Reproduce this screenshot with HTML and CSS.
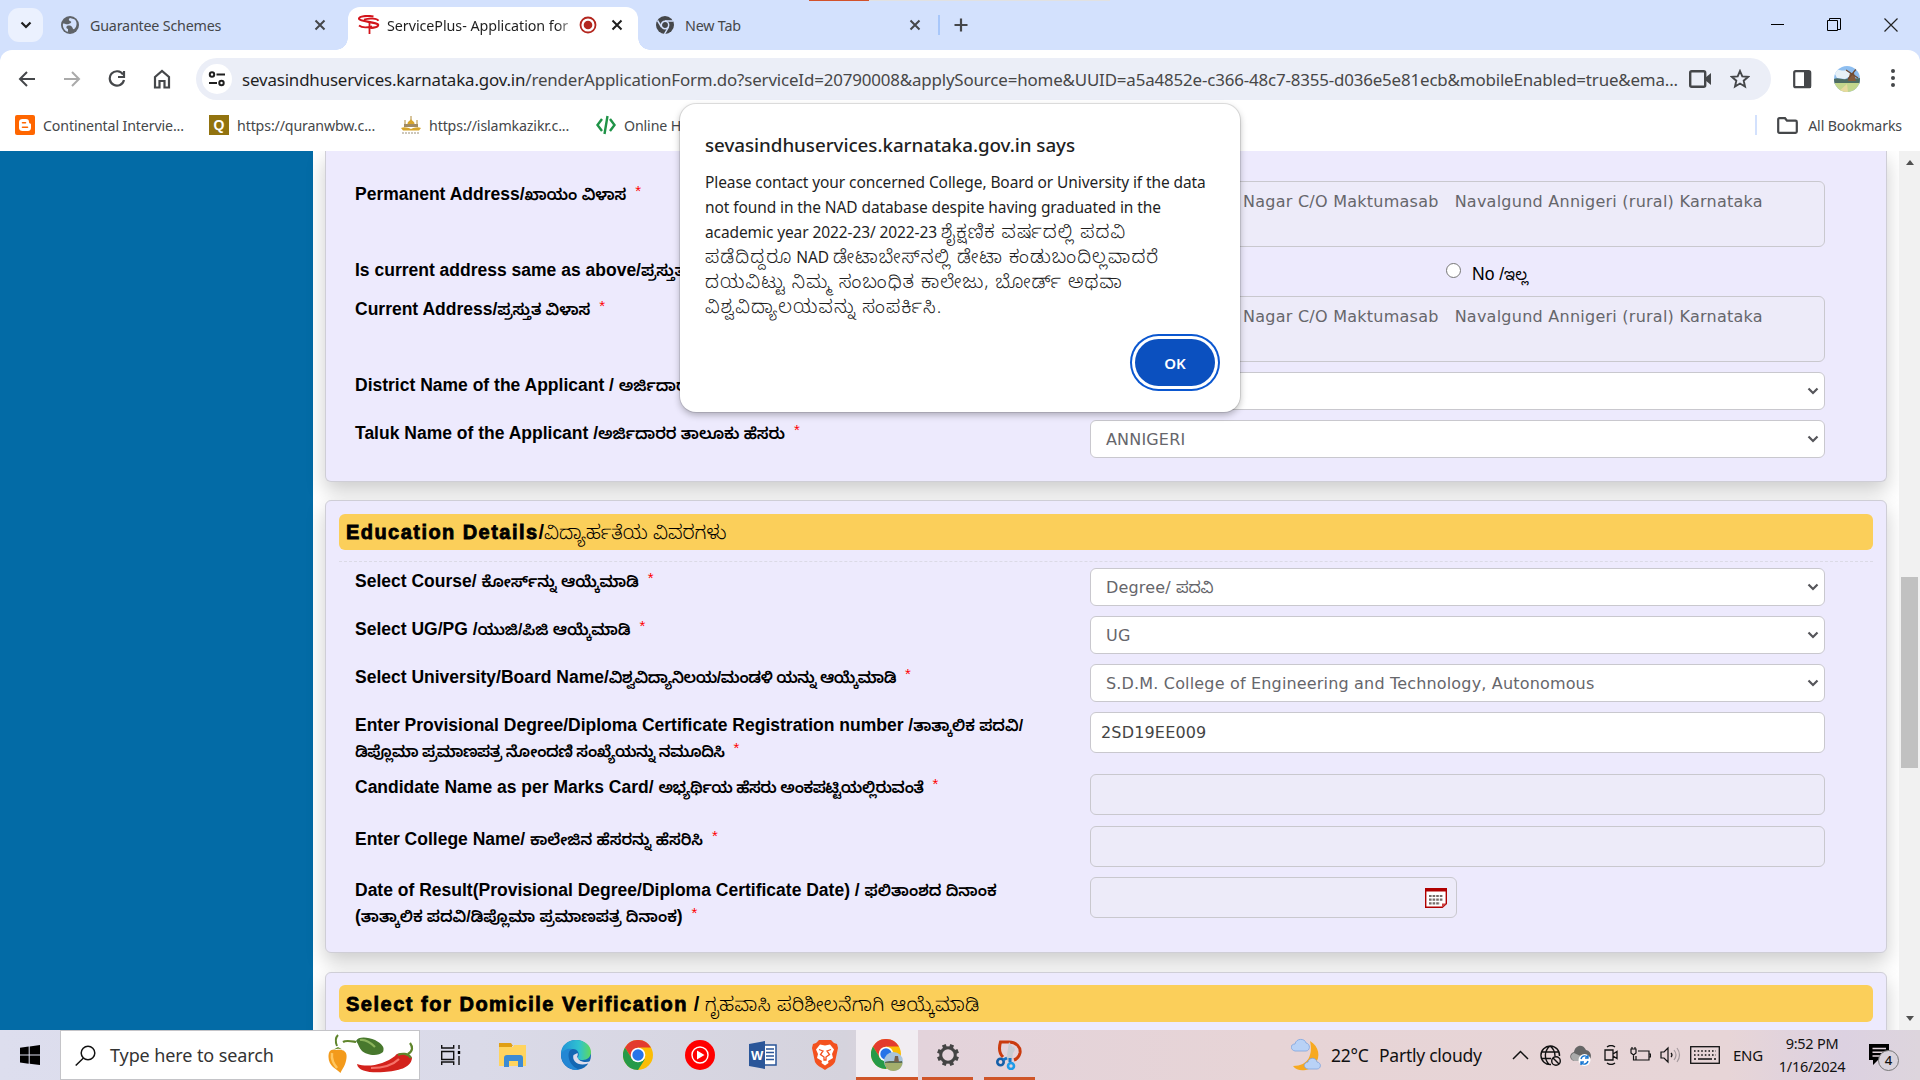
FILE: index.html
```html
<!DOCTYPE html>
<html lang="en">
<head>
<meta charset="utf-8">
<title>ServicePlus- Application for Yuva Nidhi</title>
<link rel="stylesheet" href="styles.css">
</head>
<body>
<div class="browser">
  <header class="tabstrip">
    <button class="tab-search"><svg width="12" height="8" viewBox="0 0 12 8"><path d="M1.5 1.5 6 6l4.500-4.500" fill="none" stroke="#1f1f1f" stroke-width="2.200"/></svg></button>
    <div class="tab tab-first">
      <svg width="18" height="18" viewBox="0 0 18 18"><circle cx="9" cy="9" r="9" fill="#5f6368"/><path d="M9 2c-2 1-1 3 .5 3.200 1.500.3.500 1.800-.5 2.200C7 8 6 9 4 7.800L2 7.500c-.8 4 2 8 5 8.300V13c-2-.5-2-2-1-3 2-.8 4-.3 5 .9 1 1 .5 2 2 2.300C17 10 16 4 12.500 3z" fill="#d3e1fd"/></svg>
      <span class="tab-title">Guarantee Schemes</span>
      <svg class="tab-x" width="12" height="12" viewBox="0 0 12 12"><path d="M1.500 1.500l9 9m0-9l-9 9" stroke="#45474a" stroke-width="2"/></svg>
    </div>
    <div class="tab tab-active">
      <svg width="22" height="20" viewBox="0 0 22 20"><path d="M15.500 1.500C9 .500 1 1 1 3.800 1 6.500 18 7 20 9.500c1 2.500-5 4-9 3" fill="none" stroke="#d3141b" stroke-width="2.200"/><path d="M6 4.500c6-1.500 13-1 14.500 1.200M1 10.500c3 2.500 9 2 13 .8" fill="none" stroke="#d3141b" stroke-width="1.800"/><path d="M11.500 6v13" stroke="#d3141b" stroke-width="1.800"/></svg>
      <span class="tab-title fade">ServicePlus- Application for</span>
      <svg width="18" height="18" viewBox="0 0 18 18"><circle cx="9" cy="9" r="7.500" fill="none" stroke="#b3261e" stroke-width="1.800"/><circle cx="9" cy="9" r="4.300" fill="#b3261e"/></svg>
      <svg class="tab-x" width="12" height="12" viewBox="0 0 12 12"><path d="M1.500 1.500l9 9m0-9l-9 9" stroke="#1f1f1f" stroke-width="2"/></svg>
    </div>
    <div class="tab tab-last">
      <svg width="18" height="18" viewBox="0 0 18 18"><circle cx="9" cy="9" r="9" fill="#45474a"/><circle cx="9" cy="9" r="3.700" fill="#45474a" stroke="#d3e1fd" stroke-width="1.500"/><path d="M9 5h8M5.500 11l-4-6.500M12.500 11l-4 7" stroke="#d3e1fd" stroke-width="1.500"/></svg>
      <span class="tab-title">New Tab</span>
      <svg class="tab-x" width="12" height="12" viewBox="0 0 12 12"><path d="M1.500 1.500l9 9m0-9l-9 9" stroke="#45474a" stroke-width="2"/></svg>
    </div>
    <i class="tab-sep"></i>
    <svg class="plus" width="14" height="14" viewBox="0 0 14 14"><path d="M7 .5v13M.5 7h13" stroke="#45474a" stroke-width="2.200"/></svg>
    <div class="window-controls">
      <svg width="14" height="14" viewBox="0 0 14 14"><path d="M1 6.500h13" stroke="#000"/></svg>
      <svg width="14" height="14" viewBox="0 0 14 14"><path d="M.5 2.500h10v10H.5zM2.500 2.500v-2h11v11h-2.500" fill="none" stroke="#000"/></svg>
      <svg width="14" height="14" viewBox="0 0 14 14"><path d="M.5.500l13 13m0-13l-13 13" stroke="#222" stroke-width="1.200"/></svg>
    </div>
    <div class="share-line"><i></i></div>
  </header>

  <nav class="toolbar">
    <svg class="nav-btn" width="18" height="18" viewBox="0 0 18 18"><path d="M9 2L2 9l7 7M2 9h15" fill="none" stroke="#45474a" stroke-width="2"/></svg>
    <svg class="nav-btn" width="18" height="18" viewBox="0 0 18 18"><path d="M9 2l7 7-7 7M16 9H1" fill="none" stroke="#aaa" stroke-width="2"/></svg>
    <svg class="nav-btn" width="18" height="18" viewBox="0 0 18 18"><path d="M15 4.500A7.200 7.200 0 1 0 16 10M16 1v6h-6" fill="none" stroke="#45474a" stroke-width="2.200"/></svg>
    <svg class="nav-btn" width="18" height="20" viewBox="0 0 18 20"><path d="M2 8l7-6 7 6v10.500h-4.500V12h-5v6.500H2z" fill="none" stroke="#45474a" stroke-width="2.200"/></svg>
    <div class="omnibox">
      <span class="site-info"><svg width="18" height="16" viewBox="0 0 18 16"><g fill="none" stroke="#1f1f1f" stroke-width="2"><circle cx="4" cy="3.500" r="2.200"/><path d="M8.500 3.500H17M1 12h8"/><circle cx="13.500" cy="12" r="2.200"/></g></svg></span>
      <span class="url"><b>sevasindhuservices.karnataka.gov.in</b>/renderApplicationForm.do?serviceId=20790008&amp;applySource=home&amp;UUID=a5a4852e-c366-48c7-8355-d036e5e81ecb&amp;mobileEnabled=true&amp;ema...</span>
      <svg width="22" height="18" viewBox="0 0 22 18"><rect x="1.200" y="1.200" width="15" height="15.600" rx="1.500" fill="none" stroke="#45474a" stroke-width="2.400"/><path d="M16 8l6-5v12l-6-5z" fill="#45474a"/></svg>
      <svg class="star" width="20" height="20" viewBox="0 0 20 20"><path d="M10 2l2.300 5.400 5.700.5-4.300 3.800 1.300 5.800-5-3-5 3 1.300-5.800L2 7.900l5.700-.5z" fill="none" stroke="#45474a" stroke-width="1.900"/></svg>
    </div>
    <svg width="19" height="19" viewBox="0 0 19 19"><rect x="1.200" y="1.200" width="16" height="16" rx="1.500" fill="none" stroke="#45474a" stroke-width="2.200"/><path d="M11 1h7v17h-7z" fill="#45474a"/></svg>
    <svg class="avatar" width="26" height="26" viewBox="0 0 26 26"><clipPath id="av"><circle cx="13" cy="13" r="13"/></clipPath><g clip-path="url(#av)"><path fill="#8ebef0" d="M0 0h26v26H0z"/><path d="M0 6c4-5 7 0 12-2l6 5-7 4-8-1z" fill="#e8f1f8"/><path d="M0 13c4-2 8 1 12 0s9 0 14-1v6H0z" fill="#4e6c62"/><path d="M0 17h26v9H0z" fill="#c3d68c"/><path d="M14 15l2-8h4l2 8z" fill="#855b3c"/><path d="M12 4l12 8M23 2l-9 11" stroke="#6f4b35" stroke-width="1.300"/><path d="M4 26l9-8 1 8z" fill="#e7da9d"/></g></svg>
    <svg width="6" height="22" viewBox="0 0 6 22"><g fill="#45474a"><circle cx="3" cy="3" r="2"/><circle cx="3" cy="10" r="2"/><circle cx="3" cy="17" r="2"/></g></svg>
  </nav>

  <div class="bookmarks">
    <a class="bm"><svg width="20" height="20" viewBox="0 0 20 20"><rect width="20" height="20" rx="2" fill="#f60"/><path d="M7.500 4H11c2 0 3 1.300 3 3 0 2 2 1 2 2.500V13c0 2-1.500 3-3 3H7.500c-2 0-3.500-1.300-3.500-3V7c0-2 1.500-3 3.500-3z" fill="#fff"/><path d="M7.500 7.800h3M7.500 12.200h5" stroke="#f60" stroke-width="1.600" stroke-linecap="round"/></svg>Continental Intervie...</a>
    <a class="bm bm2"><span class="fav-q">Q</span>https://quranwbw.c...</a>
    <a class="bm bm3"><svg width="20" height="18" viewBox="0 0 20 18"><path d="M10 0v4M4 4v5M16 4v5" stroke="#b08a3a" stroke-width="1"/><path d="M6.500 8c0-3 2.500-3 3.500-5 1 2 3.500 2 3.500 5z" fill="#d7a52b"/><path d="M3 8h14v3H3z" fill="#a08a63"/><path d="M0 12c4-1.500 7 0 10 1 3-1 6-2.500 10-1l-2 2.500H2z" fill="#d7a52b"/><path d="M1 17h18" stroke="#9a8f78" stroke-dasharray="2 1"/></svg>https://islamkazikr.c...</a>
    <a class="bm bm4"><svg width="20" height="20" viewBox="0 0 20 20"><path d="M6 4l-4.500 6L6 16M14 4l4.500 6L14 16M11.500 1l-3 18" fill="none" stroke="#1f9347" stroke-width="2.400"/></svg>Online H</a>
    <a class="all-bm"><i></i><svg width="21" height="17" viewBox="0 0 21 17"><path d="M1.200 2.500C1.200 1.500 1.500 1.200 2.500 1.200H8l2 2.500h8.500c1 0 1.300.4 1.300 1.300v9.500c0 1-.4 1.300-1.300 1.300h-16c-1 0-1.300-.4-1.300-1.300z" fill="none" stroke="#45474a" stroke-width="2.200"/></svg>All Bookmarks</a>
  </div>

  <main class="page">
    <aside class="side"></aside>
    <div class="form">
      <section class="card card-address">
        <div class="row"><label>Permanent Address/<span class="kn">ಖಾಯಂ ವಿಳಾಸ</span><sup>*</sup></label><div class="field area"><span>Nagar C/O Maktumasab&nbsp;&nbsp; Navalgund Annigeri (rural) Karnataka</span></div></div>
        <div class="row row-radio"><label>Is current address same as above/<span class="kn">ಪ್ರಸ್ತುತ</span></label><div class="radio"><i></i>No /<span class="kn">ಇಲ್ಲ</span></div></div>
        <div class="row"><label>Current Address/<span class="kn">ಪ್ರಸ್ತುತ ವಿಳಾಸ</span><sup>*</sup></label><div class="field area"><span>Nagar C/O Maktumasab&nbsp;&nbsp; Navalgund Annigeri (rural) Karnataka</span></div></div>
        <div class="row"><label>District Name of the Applicant / <span class="kn">ಅರ್ಜಿದಾರ</span></label><div class="field select"><svg class="chev" viewBox="0 0 12 8"><path d="M1.500 1.500L6 6l4.500-4.500"/></svg></div></div>
        <div class="row"><label>Taluk Name of the Applicant /<span class="kn">ಅರ್ಜಿದಾರರ ತಾಲೂಕು ಹೆಸರು</span><sup>*</sup></label><div class="field select">ANNIGERI<svg class="chev" viewBox="0 0 12 8"><path d="M1.500 1.500L6 6l4.500-4.500"/></svg></div></div>
      </section>

      <section class="card card-edu">
        <h2><strong>Education Details</strong>/<span class="kn">ವಿದ್ಯಾರ್ಹತೆಯ ವಿವರಗಳು</span></h2>
        <hr>
        <div class="row"><label>Select Course/ <span class="kn">ಕೋರ್ಸ್‌ನ್ನು ಆಯ್ಕೆಮಾಡಿ</span><sup>*</sup></label><div class="field select">Degree/&nbsp;<span class="kn">ಪದವಿ</span><svg class="chev" viewBox="0 0 12 8"><path d="M1.500 1.500L6 6l4.500-4.500"/></svg></div></div>
        <div class="row"><label>Select UG/PG /<span class="kn">ಯುಜಿ/ಪಿಜಿ ಆಯ್ಕೆಮಾಡಿ</span><sup>*</sup></label><div class="field select">UG<svg class="chev" viewBox="0 0 12 8"><path d="M1.500 1.500L6 6l4.500-4.500"/></svg></div></div>
        <div class="row"><label>Select University/Board Name/<span class="kn kn-tight">ವಿಶ್ವವಿದ್ಯಾನಿಲಯ/ಮಂಡಳಿ ಯನ್ನು ಆಯ್ಕೆಮಾಡಿ</span><sup>*</sup></label><div class="field select">S.D.M. College of Engineering and Technology, Autonomous<svg class="chev" viewBox="0 0 12 8"><path d="M1.500 1.500L6 6l4.500-4.500"/></svg></div></div>
        <div class="row"><label>Enter Provisional Degree/Diploma Certificate Registration number /<span class="kn">ತಾತ್ಕಾಲಿಕ ಪದವಿ/</span><br><span class="kn kn-tight">ಡಿಪ್ಲೊಮಾ ಪ್ರಮಾಣಪತ್ರ ನೋಂದಣಿ ಸಂಖ್ಯೆಯನ್ನು ನಮೂದಿಸಿ</span><sup>*</sup></label><div class="field input">2SD19EE009</div></div>
        <div class="row row-wide"><label>Candidate Name as per Marks Card/ <span class="kn kn-tight">ಅಭ್ಯರ್ಥಿಯ ಹೆಸರು ಅಂಕಪಟ್ಟಿಯಲ್ಲಿರುವಂತೆ</span><sup>*</sup></label><div class="field input disabled"></div></div>
        <div class="row"><label>Enter College Name/ <span class="kn">ಕಾಲೇಜಿನ ಹೆಸರನ್ನು ಹೆಸರಿಸಿ</span><sup>*</sup></label><div class="field input disabled"></div></div>
        <div class="row"><label>Date of Result(Provisional Degree/Diploma Certificate Date) / <span class="kn">ಫಲಿತಾಂಶದ ದಿನಾಂಕ</span><br>(<span class="kn">ತಾತ್ಕಾಲಿಕ ಪದವಿ/ಡಿಪ್ಲೊಮಾ ಪ್ರಮಾಣಪತ್ರ ದಿನಾಂಕ</span>)<sup>*</sup></label><div class="field input disabled date"><svg width="22" height="20" viewBox="0 0 22 20"><path d="M.7.700h20.600v15l-4 3.600H.7z" fill="#fff" stroke="#b00000" stroke-width="1.400"/><path d="M0 0h22v3.500H0z" fill="#b00000"/><path d="M4 8h14M4 11.700h14M4 15.400h11" stroke="#746c69" stroke-width="2.200" stroke-dasharray="2.600 1"/><path d="M17 19.500V15.500h4.500z" fill="#c44"/></svg></div></div>
      </section>

      <section class="card card-domicile">
        <h2><strong>Select for Domicile Verification</strong> / <span class="kn">ಗೃಹವಾಸಿ ಪರಿಶೀಲನೆಗಾಗಿ ಆಯ್ಕೆಮಾಡಿ</span></h2>
      </section>
    </div>
    <div class="scrollbar"><i class="up"></i><i class="thumb"></i><i class="down"></i></div>
  </main>

  <div class="dialog">
    <h1>sevasindhuservices.karnataka.gov.in says</h1>
    <p>Please contact your concerned College, Board or University if the data<br>not found in the NAD database despite having graduated in the<br>academic year 2022-23/ 2022-23 <span class="kn">ಶೈಕ್ಷಣಿಕ ವರ್ಷದಲ್ಲಿ ಪದವಿ</span><br><span class="kn">ಪಡೆದಿದ್ದರೂ</span> NAD <span class="kn">ಡೇಟಾಬೇಸ್‌ನಲ್ಲಿ ಡೇಟಾ ಕಂಡುಬಂದಿಲ್ಲವಾದರೆ</span><br><span class="kn">ದಯವಿಟ್ಟು ನಿಮ್ಮ ಸಂಬಂಧಿತ ಕಾಲೇಜು, ಬೋರ್ಡ್ ಅಥವಾ</span><br><span class="kn">ವಿಶ್ವವಿದ್ಯಾಲಯವನ್ನು ಸಂಪರ್ಕಿಸಿ.</span></p>
    <button>OK</button>
  </div>
</div>

<footer class="taskbar">
  <div class="start"><svg width="20" height="20" viewBox="0 0 20 20"><path d="M0 2.800L8.700 1.500V9.600H0zM9.700 1.400L20 0v9.600H9.700zM0 10.500h8.700v8.200L0 17.400zM9.700 10.500H20V20L9.700 18.700z"/></svg></div>
  <div class="search">
    <svg width="21" height="21" viewBox="0 0 21 21"><circle cx="13" cy="8" r="6.800" fill="none" stroke="#111" stroke-width="1.500"/><path d="M8.500 13L.7 20.500" stroke="#111" stroke-width="1.500"/></svg>
    <span>Type here to search</span>
    <svg class="peppers" width="88" height="42" viewBox="0 0 88 42"><path d="M10 12C8 7 8 4 11 1" fill="none" stroke="#5f852c" stroke-width="2"/><path d="M1.500 23c0-7 3-8 8-7 6-1 11 1 10 8-1 8-4 10-6 15-4-4-12-7-12-16z" fill="#f39a1b"/><path d="M5 19c-1 7 2 11 5 15" fill="none" stroke="#ffc65f" stroke-width="2.500"/><path d="M4 17c5-3 10-3 14 0l-7-4z" fill="#6d912f"/><path d="M16 8c3-2 7-1 13 0" fill="none" stroke="#5f852c" stroke-width="2.200"/><path d="M29 7c2-5 12-4 19-1 7 4 10 7 8 12-5 5-17 3-21-1-3-3-3-6-6-10z" fill="#47782d"/><path d="M33 6c5-1 10 2 15 7" fill="none" stroke="#8ab35b" stroke-width="2.200"/><path d="M30 30c12 4 28 0 38-8 3-5 15-3 17 2-1 10-14 13-28 14-12 1-26 0-27-8z" fill="#d3221c"/><path d="M72 25c-6 6-16 9-28 9" fill="none" stroke="#f6736a" stroke-width="2.200"/><path d="M71 21c4-2 10-2 13 3M81 20c5-3 5-7 2-11" fill="none" stroke="#5f852c" stroke-width="2.200"/></svg>
  </div>
  <div class="slot"><svg width="20" height="20" viewBox="0 0 20 20"><path d="M.7 0v3h12V0M.7 6.500h12v8H.7zM.7 20v-3h12v3M18 0v4M18 11v9" fill="none" stroke="#111" stroke-width="1.400"/><path d="M16.800 6h2.400v3h-2.400z"/></svg></div>
  <div class="slot"><svg width="28" height="24" viewBox="0 0 28 24"><path d="M0 0h12l2 3h-1v6H0z" fill="#e09f14"/><path d="M0 4h14l1-2h12v21H0z" fill="#ffd45f"/><path d="M5 24V15c0-2 1-3 3-3h13c2 0 3 1 3 3v9h-5v-6h-9v6z" fill="#3c8bd4"/></svg></div>
  <div class="slot"><svg width="30" height="30" viewBox="0 0 30 30"><defs><linearGradient id="eg"><stop stop-color="#2293d8"/><stop offset=".6" stop-color="#2fc2d0"/><stop offset="1" stop-color="#5fd95c"/></linearGradient></defs><circle cx="15" cy="15" r="15" fill="#1467b3"/><path d="M0 14C0 5 7 0 15 0c9 0 15 6 15 12 0 5-4 8-8 8-5 0-6-2-5-3 2-3 0-8-5-8-6 0-10 4-12 5z" fill="url(#eg)"/><path d="M0 14c2-4 7-6 11-5-6 2-4 15 4 19l3 2C8 31 0 24 0 14z" fill="#2387d4"/><path d="M12.500 15c-2 6 5 12 14.500 8.500l1 1.500c2-2 2-4 2-4-5 2-12 1-13.500-3.500-1-1 1-2 0-4.500z" fill="#dcdcec"/></svg></div>
  <div class="slot"><svg width="30" height="30" viewBox="0 0 30 30"><circle cx="15" cy="15" r="15" fill="#fbbd05"/><path d="M2 7.500A15 15 0 0 1 28 7.500H15L9 19z" fill="#e33b2e"/><path d="M2 7.500A15 15 0 0 0 15 30l7-11-7 3-6-3z" fill="#269a48"/><circle cx="15" cy="15" r="7.300" fill="#fff"/><circle cx="15" cy="15" r="5.700" fill="#2674e8"/></svg></div>
  <div class="slot"><svg width="30" height="30" viewBox="0 0 30 30"><circle cx="15" cy="15" r="15" fill="#f00"/><circle cx="15" cy="15" r="8" fill="none" stroke="#fff" stroke-width="1.400"/><path d="M12 10.500l7.500 4.500-7.500 4.500z" fill="#fff"/></svg></div>
  <div class="slot"><svg width="28" height="28" viewBox="0 0 28 28"><path d="M14 4h13v20H14z" fill="#fff" stroke="#2a5699" stroke-width="1.500"/><path d="M17 8h8M17 11.500h8M17 15h8M17 18.500h8" stroke="#2a5699" stroke-width="1.500"/><path d="M0 3L16 0v28L0 25z" fill="#2a5699"/><text x="2" y="19" font-family="Liberation Sans" font-weight="700" font-size="13" fill="#fff">W</text></svg></div>
  <div class="slot"><svg width="26" height="30" viewBox="0 0 26 30"><path d="M7 0h12l3 3 3 1 1 4-3 14c-2 4-6 5-10 8-4-3-8-4-10-8L0 8l1-4 3-1z" fill="#f4511e"/><path d="M13 5.500l5-1 4 5-2 4.500 1 4-5 3 .5 2L13 25.500 9.500 23l.5-2-5-3 1-4-2-4.500 4-5z" fill="#fff"/><path d="M7 9.500l4 1.500-2.500 3.500L12 17v3h2v-3l3.500-2.500L15 11l4-1.500" fill="none" stroke="#f4511e" stroke-width="1.300"/></svg></div>
  <div class="slot active"><svg width="32" height="32" viewBox="0 0 32 32"><circle cx="15" cy="15" r="15" fill="#fbbd05"/><path d="M2 7.500A15 15 0 0 1 28 7.500H15L9 19z" fill="#e33b2e"/><path d="M2 7.500A15 15 0 0 0 15 30l7-11-7 3-6-3z" fill="#269a48"/><circle cx="15" cy="15" r="7.300" fill="#fff"/><circle cx="15" cy="15" r="5.700" fill="#2674e8"/><circle cx="22.500" cy="22.500" r="9.500" fill="#a9c4dc"/><path d="M13.500 24c5-2 12-1 18-1 0 5-4 9-9 9s-8-3-9-8z" fill="#a3ae6c"/><path d="M14 23c5-2 12 0 17-1v2H14z" fill="#5b6d55"/><path d="M23 23l1-6h3l1 6z" fill="#76604c"/></svg></div>
  <div class="slot open"><svg width="24" height="28" viewBox="0 0 24 28"><ellipse cx="12" cy="14" rx="7.300" ry="7.300" fill="none" stroke="#444" stroke-width="3"/><g stroke="#444" stroke-width="4"><path d="M12 3v4M12 21v4M1 14h4M19 14h4" transform="rotate(22.500 12 14)"/><path d="M12 3v4M12 21v4M1 14h4M19 14h4" transform="rotate(67.500 12 14)"/></g></svg></div>
  <div class="slot open"><svg width="26" height="30" viewBox="0 0 26 30"><path d="M7 17C3 13 3 7 4.500 2H13c7 0 12 5 11 11-1 4-3 6-6 7" fill="none" stroke="#ca3b0e" stroke-width="3"/><path d="M13 2l-2 13 5 6 1.500-13zM18 6l-9 13 3 2 7-11z" fill="#c9ccd1"/><circle cx="4.500" cy="22" r="3.200" fill="none" stroke="#155fa8" stroke-width="2.600"/><circle cx="15" cy="26" r="3" fill="none" stroke="#1f9be8" stroke-width="2.600"/><path d="M7 20l4-2M14 22v-4" stroke="#1975c4" stroke-width="3"/></svg></div>
  <div class="tray">
    <svg width="30" height="36" viewBox="0 0 30 36"><path d="M19 4c9 5 11 16 5 23-5 7-17 9-22 2 16 0 20-12 17-25z" fill="#f7a91f"/><path d="M4 14c-5-1-5-7 0-7 1-6 10-6 11-1 5 1 4 8 0 8z" fill="#b9d2f6" stroke="#7da5df" stroke-width=".8"/><path d="M17 32c-5-1-5-6 0-7 1-5 8-5 9 0 5 1 4 7 0 7z" fill="#b9d2f6" stroke="#7da5df" stroke-width=".8"/></svg>
    <span>22°C</span><span>Partly cloudy</span>
    <svg width="17" height="10" viewBox="0 0 17 10"><path d="M1 9l7.500-7.500L16 9" fill="none" stroke="#111" stroke-width="1.500"/></svg>
    <svg width="21" height="21" viewBox="0 0 21 21"><g fill="none" stroke="#111" stroke-width="1.400"><path d="M11 19.500A9.300 9.300 0 1 1 19.500 11M1 7h18M1 13.500h10M10 1C4 6 4 14 9 19.500M10 1c4 3 5 6 5 10"/><circle cx="16" cy="16" r="4.300"/><path d="M13 13l6 6"/></g></svg>
    <svg width="21" height="22" viewBox="0 0 21 22"><path d="M4 17c-5-1-5-8 0-9C5 1 13-1 16 6c5 1 6 6 4 9" fill="#666"/><path d="M4 17c-4-2-4-7 0-8l9 4v4z" fill="#aaa"/><circle cx="14.500" cy="16" r="6" fill="#fff"/><path d="M11 15c1-4 6-4 7-1m0-3v3h-3M18 17c-1 4-6 4-7 1m0 3v-3h3" fill="none" stroke="#1776d1" stroke-width="1.400"/></svg>
    <svg width="14" height="20" viewBox="0 0 14 20"><path d="M3 2q4-3 8 0M3 18q4 3 8 0M1 5h8v10H1zM9 9l4-2.500v7L9 11z" fill="none" stroke="#111" stroke-width="1.300"/></svg>
    <svg width="21" height="16" viewBox="0 0 21 16"><path d="M8 4h11v9H6V9M19.500 7h1v3h-1M1 2h5v4L3.500 8 1 6zM2 2V0M5 2V0M3.500 8v5H6" fill="none" stroke="#111" stroke-width="1.200"/></svg>
    <svg width="21" height="18" viewBox="0 0 21 18"><path d="M1 6h3l4-4v14l-4-4H1zM11 7q2 2 0 4" fill="none" stroke="#111" stroke-width="1.200"/><path d="M14 4q4 5 0 10M17 2q5 7 0 14" fill="none" stroke="#a59a9e" stroke-width="1.200"/></svg>
    <svg width="30" height="18" viewBox="0 0 30 18"><rect x=".7" y=".7" width="28.600" height="16.600" fill="none" stroke="#111" stroke-width="1.300"/><path d="M4 5h22M4 9h22" stroke="#111" stroke-width="1.500" stroke-dasharray="1.600 2"/><path d="M4 13h2M8 13h14M24 13h2" stroke="#111" stroke-width="1.300"/></svg>
    <span class="lang">ENG</span>
    <div class="clock"><span>9:52 PM</span><span>1/16/2024</span></div>
    <div class="notif"><svg width="21" height="22" viewBox="0 0 21 22"><path d="M0 0h20v16H9l-5 5v-5H0z"/><path d="M3.500 4.500H17M3.500 8.300H17M3.500 12H12" stroke="#e3d5dd" stroke-width="1.400"/></svg><b>4</b></div>
  </div>
</footer>
</body>
</html>
```
FILE: styles.css
```css
* { box-sizing: border-box; }
body { margin: 0; width: 1920px; height: 1080px; overflow: hidden; font-family: "Noto Sans", "Noto Sans Kannada", sans-serif; background: #fff; display: flex; flex-direction: column; }
svg, i { display: block; flex: none; }
i { font-style: normal; }
button { border: 0; padding: 0; font: inherit; }
.kn { font-family: "Liberation Sans", "Noto Sans Kannada", sans-serif; line-height: 0; }
.browser { position: relative; height: 1030px; display: flex; flex-direction: column; }

/* tab strip */
.tabstrip { position: relative; z-index: 1; height: 50px; background: #d3e1fd; display: flex; align-items: center; padding-left: 8px; }
.tab-search { width: 35px; height: 34px; border-radius: 11px; background: #ebf1fe; display: grid; place-items: center; }
.tab { display: flex; align-items: center; height: 43px; font-size: 14.300px; color: #45474a; letter-spacing: -.2px; }
.tab-title { flex: 1; white-space: nowrap; overflow: hidden; margin-left: 11px; line-height: 24px; padding-top: 1px; }
.tab-first { width: 283px; padding-left: 18px; margin-right: 22px; }
.tab-active { position: relative; width: 290px; align-self: flex-end; background: #fff; border-radius: 12px 12px 0 0; padding: 0 15px 7px 10px; color: #1f1f1f; letter-spacing: -.05px; }
.tab-active .tab-title { margin-left: 7px; }
.tab-active::before, .tab-active::after { content: ""; position: absolute; bottom: 0; width: 12px; height: 12px; }
.tab-active::before { left: -12px; background: radial-gradient(circle at 0 0, transparent 11.500px, #fff 12px); }
.tab-active::after { right: -12px; background: radial-gradient(circle at 100% 0, transparent 11.500px, #fff 12px); }
.tab-active .tab-x { margin-left: 14px; }
.fade { -webkit-mask-image: linear-gradient(90deg, #000 88%, rgba(0,0,0,.2) 98%); mask-image: linear-gradient(90deg, #000 88%, rgba(0,0,0,.2) 98%); }
.tab-last { width: 283px; padding-left: 18px; }
.tab-sep { width: 2px; height: 20px; background: #a8c7fa; margin: 0 14px 0 17px; }
.window-controls { margin-left: auto; display: flex; gap: 43px; padding-right: 22px; }
.share-line { position: absolute; left: 809px; top: 0; width: 301px; height: 1px; background: #e1e1e1; }
.share-line i { width: 60px; height: 1px; background: #d2512a; }

/* toolbar */
.toolbar { height: 50px; padding: 8px 25px 0 18px; display: flex; align-items: center; background: #fff; border-radius: 12px 12px 0 0; box-shadow: 0 -12px 0 0 #d3e1fd; }
.nav-btn { margin-right: 27px; }
.omnibox { width: 1575px; height: 42px; flex: none; margin: 0 22px 0 -2px; background: #ebeef7; border-radius: 21px; display: flex; align-items: center; padding: 0 21px 0 6px; }
.site-info { width: 30px; height: 30px; border-radius: 50%; background: #fff; display: grid; place-items: center; }
.url { flex: 1; margin-left: 10px; font-size: 16.900px; color: #474747; white-space: nowrap; letter-spacing: -.155px; }
.url b { font-weight: 400; color: #1f1f1f; }
.star { margin-left: 19px; }
.avatar { margin: 0 30px 0 22px; }

/* bookmarks */
.bookmarks { height: 51px; display: flex; align-items: center; padding: 0 0 1px 15px; font-size: 14.200px; letter-spacing: -.13px; color: #45474a; background: #fff; }
.bm { display: flex; align-items: center; gap: 8px; width: 194px; white-space: nowrap; }
.bm2 { width: 192px; }
.bm3 { width: 195px; }
.fav-q { width: 20px; height: 20px; background: #92730f; color: #fff; font: 700 14px/20px "Liberation Sans", sans-serif; text-align: center; }
.all-bm { margin-left: auto; display: flex; align-items: center; gap: 10px; padding-right: 18px; }
.all-bm i { width: 2px; height: 20px; background: #d3e1fd; margin-right: 10px; }

/* page */
.page { height: 879px; display: flex; overflow: hidden; }
.side { width: 313px; background: #036ba6; flex: none; }
.form { width: 1586px; flex: none; padding: 0 12px; background: #fff; }
.card { background: #edeafd; border: 1px solid #cfced6; border-radius: 6px; box-shadow: 0 9px 20px rgba(0,0,0,.2); }
.card-address { height: 331px; margin-bottom: 18px; border-top: 0; border-radius: 0 0 6px 6px; padding: 30px 0 0 29px; }
.card-edu { height: 453px; margin-bottom: 19px; padding: 13px 13px 0; }
.card-domicile { height: 120px; padding: 12px 13px 0; }
h2 { margin: 0; height: 36px; border-radius: 6px; background: #fbcf5a; padding-left: 7px; font: 700 20px/37px "Liberation Sans", sans-serif; color: #000; white-space: nowrap; }
h2 strong { letter-spacing: 1.450px; -webkit-text-stroke: .8px #000; }
h2 .kn { font-weight: 300; font-size: 19px; }
.card-domicile h2 { height: 37px; line-height: 39px; }
.card-domicile strong { letter-spacing: 1.520px; }
.card-domicile .kn { letter-spacing: .5px; }
hr { margin: 11px 0 6px; border: 0; border-top: 1px dashed #dbdae6; height: 1px; }
.card-edu .row { margin-left: 16px; }
.row { display: grid; grid-template-columns: 735px 735px; margin-bottom: 10px; align-items: start; }
.row-wide { margin-bottom: 11px; }
.row-radio { height: 29px; }
label { font: 700 17.500px/26px "Liberation Sans", sans-serif; color: #000; white-space: nowrap; height: 26px; }
.row:has(br) label { height: 52px; }
label .kn { font-weight: 600; font-size: 15.800px; letter-spacing: -.05px; }
label .kn-tight { letter-spacing: -.5px; }
sup { color: #f00; font: 400 15px/0 "Liberation Sans", sans-serif; margin-left: 9px; vertical-align: 4px; }
.field { position: relative; display: flex; align-items: center; border: 1px solid #c9c8ce; border-radius: 6px; background: #fff; font-family: "DejaVu Sans", sans-serif; font-size: 16px; letter-spacing: .17px; color: #66666b; white-space: nowrap; }
.area { height: 66px; background: #edebf9; align-items: flex-start; padding: 10px 0 0 152px; letter-spacing: .25px; }
.select { height: 38px; padding-left: 15px; }
.select .kn { font-size: 16px; line-height: 20px; padding-top: 2px; letter-spacing: -.2px; }
.input { height: 41px; padding-left: 10px; color: #444; }
.disabled { background: #edebf9; }
.date { width: 367px; justify-content: flex-end; padding-right: 9px; }
.chev { width: 12px; height: 8px; margin-left: auto; margin-right: 5px; fill: none; stroke: #55555a; stroke-width: 2.200; }
.radio { display: flex; align-items: center; margin-left: 356px; height: 34px; font: 400 17.500px/26px "Liberation Sans", sans-serif; color: #000; }
.radio i { width: 15px; height: 15px; margin: -7px 11px 0 0; border: 1px solid #767676; border-radius: 50%; background: #fff; }
.radio .kn { font-size: 15.500px; line-height: 26px; padding-top: 1px; }
.scrollbar { width: 21px; background: #f1f1f1; display: flex; flex-direction: column; align-items: center; padding: 9px 0; }
.up, .down { border: 4px solid transparent; border-top: 0; border-bottom: 5px solid #505050; }
.thumb { width: 17px; height: 191px; background: #c1c1c1; margin-top: 412px; }
.down { margin-top: auto; border-bottom: 0; border-top: 5px solid #505050; }

/* alert dialog */
.dialog { position: absolute; left: 680px; top: 104px; width: 560px; height: 308px; background: #fff; border-radius: 16px; box-shadow: 0 0 0 1px rgba(0,0,0,.1), 0 3px 7px rgba(0,0,0,.28); padding: 28px 25px 25px; display: flex; flex-direction: column; color: #1f1f1f; }
h1 { margin: 0 0 12px; font-size: 18.800px; line-height: 26px; font-weight: 500; letter-spacing: -.05px; }
.dialog p { margin: 0; font-size: 15.500px; line-height: 25px; letter-spacing: -.1px; white-space: nowrap; }
.dialog .kn { font-family: "Noto Sans", "Noto Sans Kannada", sans-serif; font-weight: 300; font-size: 18.600px; letter-spacing: 1.100px; }
.dialog button { width: 80px; height: 47px; border-radius: 24px; background: #0b50bf; color: #fff; font-weight: 600; font-size: 15px; margin: auto 0 1px auto; flex: none; box-shadow: 0 0 0 3px #fff, 0 0 0 5px #0b57d0; }

/* taskbar */
.taskbar { position: relative; height: 50px; display: flex; align-items: center; background: linear-gradient(90deg, #dddeee 0, #dadae8 25%, #d5d3dd 44%, #e3d3db 48%, #e7d4d6 66%, #e7d5d7 90%, #dcd1e1 96%, #ddd5dd 100%); color: #111; }
.start { width: 60px; display: grid; place-items: center; }
.search { width: 360px; height: 50px; background: #fff; border: 1px solid #c4c4c8; display: flex; align-items: center; padding: 0 4px 0 14px; }
.search span { flex: 1; margin-left: 14px; font-size: 18px; color: #333; white-space: nowrap; letter-spacing: -.1px; }
.slot { width: 62.300px; height: 50px; flex: none; display: grid; place-items: center; }
.slot.active { background: #f1edf2; box-shadow: inset 0 -3px #cf5528; }
.slot.open { width: 61.500px; background: linear-gradient(#cf5528, #cf5528) center bottom / 51px 3px no-repeat; }
.slot.active + .open { margin-left: -1.500px; }
.tray { width: 629px; margin-left: auto; display: grid; grid-template-columns: 40px 48px 133px 28px 30px 34px 26px 30px 30px 43px 46px 90px 51px; align-items: center; font-size: 17.500px; white-space: nowrap; }
.tray span { letter-spacing: -.25px; }
.tray .lang { font-size: 15px; }
.clock { width: 66px; font-size: 14.500px; line-height: 23px; display: flex; flex-direction: column; align-items: center; }
.notif { position: relative; }
.notif b { position: absolute; left: 9px; top: 6px; width: 21px; height: 21px; border: 1px solid #777; border-radius: 50%; background: #d9d3dc; font: 500 13px/19px "Noto Sans", sans-serif; text-align: center; }
```
